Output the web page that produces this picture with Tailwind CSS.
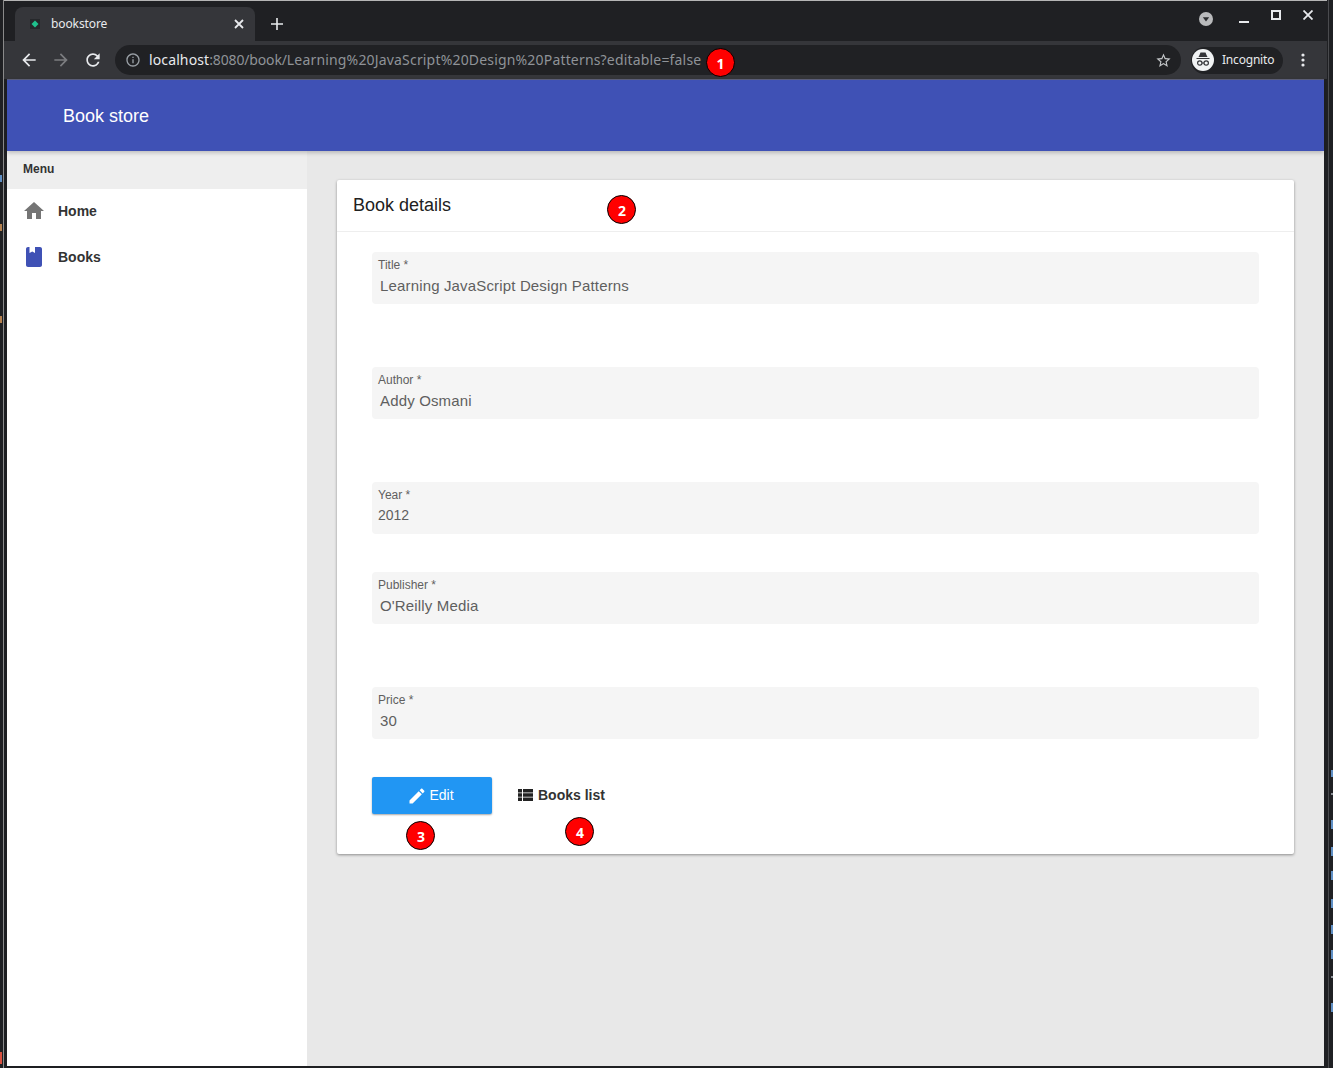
<!DOCTYPE html>
<html lang="en">
<head>
  <meta charset="UTF-8">
  <meta name="viewport" content="width=device-width, initial-scale=1.0">
  <title>bookstore</title>
  <script src="https://cdn.jsdelivr.net/npm/@tailwindcss/browser@4"></script>
</head>
<body class="bg-[#1f2023]">
  <div class="relative w-[1333px] h-[1068px] overflow-hidden flex font-['Liberation_Sans',sans-serif]">
    <!-- Desktop behind the window -->
    <div class="w-[3px] shrink-0 bg-[#1f2023]"></div>
    <div class="w-[1px] shrink-0 bg-[#8a8a8a]"></div>

    <!-- Browser window -->
    <div class="w-[1323px] shrink-0 h-[1066px] flex flex-col border-t border-[#b5b5b5] bg-[#1f2023]">
      <!-- Tab strip -->
      <div class="h-[40px] shrink-0 flex items-end pl-[11px] font-['Noto_Sans',sans-serif] text-[12px] text-[#e8eaed]">
        <div class="w-[240px] h-[34px] bg-[#35363a] rounded-t-[8px] flex items-center pl-[15px] pr-[8px]">
          <svg class="w-[10px] h-[10px] mr-[11px]" viewBox="0 0 10 10"><rect width="10" height="10" fill="#26282b"/><path d="M5 1.500L8.500 5 5 8.500 1.500 5z" fill="#1fc18d"/></svg>
          <span class="flex-1 leading-none tracking-[-0.1px]">bookstore</span>
          <svg class="w-[16px] h-[16px]" viewBox="0 0 16 16" fill="none" stroke="#e8eaed" stroke-width="1.8"><path d="M4 4l8 8M12 4l-8 8"/></svg>
        </div>
        <svg class="w-[14px] h-[14px] ml-[15px] mb-[10px]" viewBox="0 0 14 14" fill="none" stroke="#e8eaed" stroke-width="1.6"><path d="M7 1v12M1 7h12"/></svg>
        <div class="flex-1"></div>
        <div class="flex items-center h-full pb-[6px] mr-[14px]">
          <svg class="w-[14px] h-[14px] mr-[26px] mt-[2px]" viewBox="0 0 14 14"><circle cx="7" cy="7" r="7" fill="#b9babc"/><path d="M3.800 5.200h6.400L7 9.600z" fill="#2b2c2f"/></svg>
          <svg class="w-[10px] h-[12px] mr-[22px]" viewBox="0 0 10 12"><rect y="9" width="10" height="2" fill="#e8eaed"/></svg>
          <svg class="w-[10px] h-[10px] mr-[22px] mb-[6px]" viewBox="0 0 10 10" fill="none" stroke="#e8eaed" stroke-width="2"><rect x="1" y="1" width="8" height="8"/></svg>
          <svg class="w-[10px] h-[10px] mb-[6px]" viewBox="0 0 10 10" fill="none" stroke="#e8eaed" stroke-width="1.8"><path d="M.5.5l9 9M9.500.5l-9 9"/></svg>
        </div>
      </div>

      <!-- Toolbar -->
      <div class="h-[38px] shrink-0 bg-[#35363a] flex items-center pl-[15px] pr-[12px] font-['Noto_Sans',sans-serif] text-[14px]">
        <svg class="w-[20px] h-[20px]" viewBox="0 0 24 24" fill="#e8eaed"><path d="M20 11H7.830l5.590-5.590L12 4l-8 8 8 8 1.410-1.410L7.830 13H20v-2z"/></svg>
        <svg class="w-[20px] h-[20px] ml-[12px]" viewBox="0 0 24 24" fill="#7c7d80"><path d="M4 11h12.170l-5.590-5.590L12 4l8 8-8 8-1.410-1.410L16.170 13H4v-2z"/></svg>
        <svg class="w-[20px] h-[20px] ml-[12px]" viewBox="0 0 24 24" fill="#e8eaed"><path d="M17.650 6.350C16.200 4.900 14.210 4 12 4c-4.420 0-7.990 3.580-7.990 8s3.570 8 7.990 8c3.730 0 6.840-2.550 7.730-6h-2.080c-.82 2.330-3.040 4-5.650 4-3.310 0-6-2.690-6-6s2.690-6 6-6c1.660 0 3.140.69 4.220 1.780L13 11h7V4l-2.350 2.350z"/></svg>
        <div class="w-[1066px] h-[30px] ml-[12px] rounded-full bg-[#202124] flex items-center pl-[10px] pr-[9px]">
          <svg class="w-[16px] h-[16px] mr-[8px]" viewBox="0 0 24 24" fill="#9aa0a6"><path d="M11 7h2v2h-2zm0 4h2v6h-2zm1-9C6.480 2 2 6.480 2 12s4.480 10 10 10 10-4.480 10-10S17.520 2 12 2zm0 18c-4.410 0-8-3.590-8-8s3.590-8 8-8 8 3.590 8 8-3.590 8-8 8z"/></svg>
          <span class="flex-1 whitespace-nowrap tracking-[0.12px] mb-[2px] text-[#e8eaed]">localhost<span class="text-[#8f9398] tracking-[-0.15px]">:8080/book/</span><span class="text-[#8f9398] tracking-[0.175px]">Learning%20JavaScript%20Design%20Patterns?editable=false</span></span>
          <svg class="w-[17px] h-[17px]" viewBox="0 0 24 24" fill="#c4c7c9"><path d="M22 9.240l-7.190-.62L12 2 9.190 8.630 2 9.240l5.460 4.730L5.820 21 12 17.270 18.180 21l-1.630-7.030L22 9.240zM12 15.400l-3.760 2.270 1-4.280-3.320-2.880 4.380-.38L12 6.100l1.710 4.040 4.380.38-3.320 2.880 1 4.280L12 15.400z"/></svg>
        </div>
        <div class="w-[92px] h-[27px] ml-[10px] rounded-full bg-[#202124] flex items-center pl-[1px] text-[12px] text-[#e8eaed]">
          <svg class="w-[22px] h-[22px] mr-[8px]" viewBox="0 0 22 22"><circle cx="11" cy="11" r="11" fill="#f1f3f4"/><path d="M7.500 6l1-2.500h5l1 2.500 1 2h-9zM4.500 9h13v1h-13z" fill="#35363a"/><g fill="none" stroke="#35363a" stroke-width="1.200"><circle cx="7.800" cy="14" r="2.200"/><circle cx="14.200" cy="14" r="2.200"/><path d="M10 14h2"/></g></svg>
          <span class="leading-none tracking-[-0.2px]">Incognito</span>
        </div>
        <svg class="w-[4px] h-[14px] ml-[18px]" viewBox="0 0 4 14" fill="#e8eaed"><circle cx="2" cy="2" r="1.600"/><circle cx="2" cy="7" r="1.600"/><circle cx="2" cy="12" r="1.600"/></svg>
      </div>

      <!-- Page -->
      <div class="flex-1 flex flex-col pl-[3px] pr-[3px] min-h-0">
        <header class="relative z-10 h-[72px] shrink-0 bg-[#3f51b5] border-t border-[#5a5d78] flex items-center pl-[56px] pt-[2px] text-[18px] text-white shadow-[0_2px_4px_rgba(0,0,0,0.2)]">Book store</header>
        <div class="flex-1 flex min-h-0">
          <!-- Sidebar -->
          <aside class="w-[300px] shrink-0 bg-white shadow-[1px_0_4px_rgba(0,0,0,0.14)]">
            <div class="h-[38px] bg-[#eeeeee] flex items-center pl-[16px] pb-[2px] text-[12px] font-bold text-[#333333]">Menu</div>
            <nav class="text-[14px] font-bold text-[#333333]">
              <a class="h-[46px] flex items-center pl-[15px] pb-[2px]">
                <svg class="w-[24px] h-[24px] mr-[12px]" viewBox="0 0 24 24" fill="#757575"><path d="M10 20v-6h4v6h5v-8h3L12 3 2 12h3v8z"/></svg>Home
              </a>
              <a class="h-[46px] flex items-center pl-[15px] pb-[2px]">
                <svg class="w-[24px] h-[24px] mr-[12px]" viewBox="0 0 24 24" fill="#3f51b5"><path d="M18 2H6c-1.100 0-2 .9-2 2v16c0 1.100.9 2 2 2h12c1.100 0 2-.9 2-2V4c0-1.100-.9-2-2-2zM7.500 2H13v6l-2.750-1.500L7.500 8V2z" fill-rule="evenodd"/></svg>Books
              </a>
            </nav>
          </aside>
          <!-- Main -->
          <main class="flex-1 bg-[#e8e8e8] pl-[30px] pr-[30px] pt-[29px]">
            <section class="h-[674px] bg-white rounded-[2px] shadow-[0_1px_3px_rgba(0,0,0,0.4)]">
              <h2 class="h-[52px] border-b border-[#eeeeee] flex items-center pl-[16px] text-[18px] text-[#212121]">Book details</h2>
              <form class="pt-[20px] px-[35px]">
                <div class="h-[52px] mb-[63px] bg-[#f5f5f5] rounded-[4px] px-[6px] pt-[6px] text-[#5f5f5f]">
                  <label class="block text-[12px] leading-[14px]">Title *</label>
                  <div class="pl-[2px] mt-[5px] text-[15px] leading-[18px] tracking-[0.157px]">Learning JavaScript Design Patterns</div>
                </div>
                <div class="h-[52px] mb-[63px] bg-[#f5f5f5] rounded-[4px] px-[6px] pt-[6px] text-[#5f5f5f]">
                  <label class="block text-[12px] leading-[14px]">Author *</label>
                  <div class="pl-[2px] mt-[5px] text-[15px] leading-[18px] tracking-[0.157px]">Addy Osmani</div>
                </div>
                <div class="h-[52px] mb-[38px] bg-[#f5f5f5] rounded-[4px] px-[6px] pt-[6px] text-[#5f5f5f]">
                  <label class="block text-[12px] leading-[14px]">Year *</label>
                  <div class="mt-[4px] text-[14px] leading-[18px]">2012</div>
                </div>
                <div class="h-[52px] mb-[63px] bg-[#f5f5f5] rounded-[4px] px-[6px] pt-[6px] text-[#5f5f5f]">
                  <label class="block text-[12px] leading-[14px]">Publisher *</label>
                  <div class="pl-[2px] mt-[5px] text-[15px] leading-[18px] tracking-[0.157px]">O'Reilly Media</div>
                </div>
                <div class="h-[52px] mb-[38px] bg-[#f5f5f5] rounded-[4px] px-[6px] pt-[6px] text-[#5f5f5f]">
                  <label class="block text-[12px] leading-[14px]">Price *</label>
                  <div class="pl-[2px] mt-[5px] text-[15px] leading-[18px] tracking-[0.157px]">30</div>
                </div>
                <div class="flex items-center">
                  <button type="button" class="w-[120px] h-[37px] pr-[3px] bg-[#2196f3] rounded-[2px] shadow-[0_1px_2px_rgba(0,0,0,0.35)] flex items-center justify-center text-[14px] text-white">
                    <svg class="w-[20px] h-[20px] mr-[2px]" viewBox="0 0 24 24" fill="#ffffff"><path d="M3 17.250V21h3.750L17.810 9.940l-3.750-3.750L3 17.250zM20.710 7.040c.39-.39.39-1.020 0-1.410l-2.340-2.340c-.39-.39-1.020-.39-1.410 0l-1.830 1.830 3.750 3.750 1.830-1.830z"/></svg>Edit
                  </button>
                  <button type="button" class="ml-[26px] flex items-center text-[14px] font-bold text-[#333333]">
                    <svg class="w-[15px] h-[12px] mr-[5px] mb-[2px]" viewBox="0 0 15 12" fill="#222222"><path d="M0 0h4v3.500H0zM5 0h10v3.500H5zM0 4.250h4v3.500H0zM5 4.250h10v3.500H5zM0 8.500h4V12H0zM5 8.500h10V12H5z"/></svg>Books list
                  </button>
                </div>
              </form>
            </section>
          </main>
        </div>
      </div>
    </div>

    <!-- Desktop behind the window, right edge -->
    <div class="w-[1px] shrink-0 bg-[#4a4b4e] ml-[1px]"></div>

    <!-- Bits of the editor behind the window -->
    <div class="absolute left-0 top-[175px] w-[2px] h-[7px] bg-[#5f8fc4]"></div>
    <div class="absolute left-0 top-[224px] w-[2px] h-[7px] bg-[#b5814f]"></div>
    <div class="absolute left-0 top-[316px] w-[2px] h-[7px] bg-[#b5814f]"></div>
    <div class="absolute left-0 top-[1052px] w-[2px] h-[12px] bg-[#d9503f]"></div>
    <div class="absolute left-[1331px] top-[770px] w-[2px] h-[7px] bg-[#5f8fc4]"></div>
    <div class="absolute left-[1331px] top-[793px] w-[2px] h-[2px] bg-[#8a8f96]"></div>
    <div class="absolute left-[1331px] top-[820px] w-[2px] h-[9px] bg-[#5f8fc4]"></div>
    <div class="absolute left-[1331px] top-[847px] w-[2px] h-[9px] bg-[#5f8fc4]"></div>
    <div class="absolute left-[1331px] top-[871px] w-[2px] h-[9px] bg-[#5f8fc4]"></div>
    <div class="absolute left-[1331px] top-[899px] w-[2px] h-[9px] bg-[#5f8fc4]"></div>
    <div class="absolute left-[1331px] top-[925px] w-[2px] h-[9px] bg-[#5f8fc4]"></div>
    <div class="absolute left-[1331px] top-[950px] w-[2px] h-[9px] bg-[#5f8fc4]"></div>
    <div class="absolute left-[1331px] top-[976px] w-[2px] h-[2px] bg-[#8a8f96]"></div>
    <div class="absolute left-[1331px] top-[1003px] w-[2px] h-[9px] bg-[#5f8fc4]"></div>

    <!-- Numbered annotations over the screenshot -->
    <div class="absolute left-[706px] top-[48px] w-[29px] h-[29px] pt-[2px] rounded-full bg-[#ff0000] border border-black flex items-center justify-center font-['Noto_Sans',sans-serif] font-bold text-[14px] text-white">1</div>
    <div class="absolute left-[607px] top-[195px] w-[29px] h-[29px] pt-[2px] pl-[1px] rounded-full bg-[#ff0000] border border-black flex items-center justify-center font-['Noto_Sans',sans-serif] font-bold text-[14px] text-white">2</div>
    <div class="absolute left-[406px] top-[821px] w-[29px] h-[29px] pt-[2px] pl-[1px] rounded-full bg-[#ff0000] border border-black flex items-center justify-center font-['Noto_Sans',sans-serif] font-bold text-[14px] text-white">3</div>
    <div class="absolute left-[565px] top-[817px] w-[29px] h-[29px] pt-[2px] pl-[1px] rounded-full bg-[#ff0000] border border-black flex items-center justify-center font-['Noto_Sans',sans-serif] font-bold text-[14px] text-white">4</div>
  </div>
</body>
</html>
